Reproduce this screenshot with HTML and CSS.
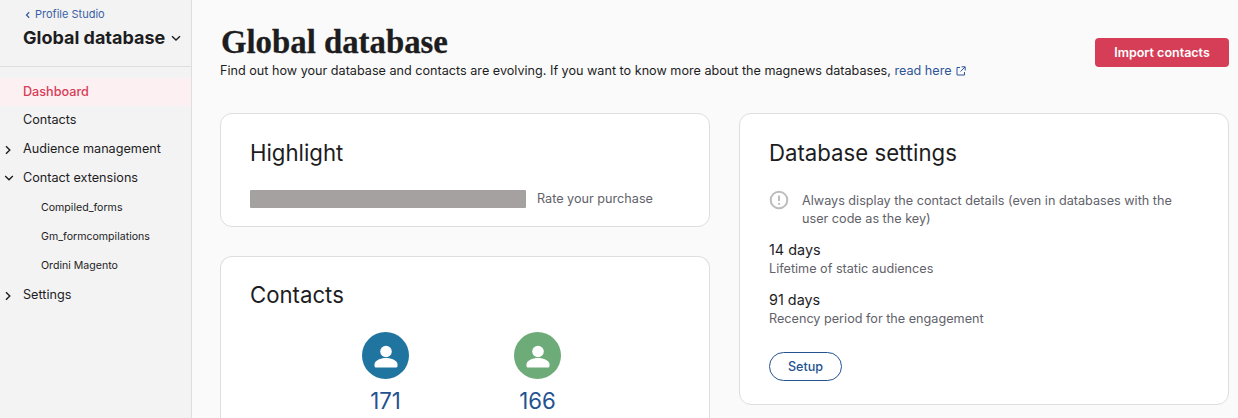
FILE: index.html
```html
<!DOCTYPE html>
<html lang="en">
<head>
    <meta charset="UTF-8">
    <title>Global database</title>
    <link rel="stylesheet" href="styles.css">
</head>
<body>
    <aside class="sidebar">
        <div class="side-head">
            <a class="back-link">
                <svg class="back-icon" width="6" height="8" viewBox="0 0 6 8"><path d="M4.2 1.2 1.5 4l2.7 2.8" fill="none" stroke="currentColor" stroke-width="1.3"/></svg>
                Profile Studio
            </a>
            <div class="side-title">
                Global database
                <svg width="10" height="7" viewBox="0 0 10 7"><path d="M1 1.2 5 5l4-3.8" fill="none" stroke="#1d1d1f" stroke-width="1.4"/></svg>
            </div>
        </div>
        <nav class="side-nav">
            <a class="nav-item active">Dashboard</a>
            <a class="nav-item">Contacts</a>
            <a class="nav-item">
                <svg class="caret" width="8" height="10" viewBox="0 0 8 10"><path d="M2 1.2 5.8 5 2 8.8" fill="none" stroke="#1d1d1f" stroke-width="1.4"/></svg>
                Audience management
            </a>
            <a class="nav-item">
                <svg class="caret" width="10" height="8" viewBox="0 0 10 8"><path d="M1.2 2 5 5.8 8.8 2" fill="none" stroke="#1d1d1f" stroke-width="1.4"/></svg>
                Contact extensions
            </a>
            <div class="sub-list">
                <a class="nav-item sub">Compiled_forms</a>
                <a class="nav-item sub">Gm_formcompilations</a>
                <a class="nav-item sub">Ordini Magento</a>
            </div>
            <a class="nav-item">
                <svg class="caret" width="8" height="10" viewBox="0 0 8 10"><path d="M2 1.2 5.8 5 2 8.8" fill="none" stroke="#1d1d1f" stroke-width="1.4"/></svg>
                Settings
            </a>
        </nav>
    </aside>

    <main class="content">
        <header class="page-head">
            <div>
                <h1>Global database</h1>
                <p class="intro">Find out how your database and contacts are evolving. If you want to know more about the magnews databases, <a class="link">read here
                    <svg width="10" height="10" viewBox="0 0 10 10"><path d="M4 1.500H1v7.500h7.500V6M5.500 .8h3.700v3.700M9 1 4.500 5.500" fill="none" stroke="currentColor" stroke-width="1"/></svg></a></p>
            </div>
            <button class="btn-primary">Import contacts</button>
        </header>

        <div class="columns">
            <div class="col">
                <section class="card highlight">
                    <h2>Highlight</h2>
                    <div class="highlight-row">
                        <span class="redacted"></span>
                        <span class="muted">Rate your purchase</span>
                    </div>
                </section>
                <section class="card contacts">
                    <h2>Contacts</h2>
                    <div class="stats">
                        <div class="stat">
                            <span class="avatar blue">
                                <svg width="26" height="26" viewBox="0 0 26 26"><circle cx="13" cy="8.500" r="5.800" fill="#fff"/><path d="M1.500 23v-1.500c0-4 6-6.500 11.500-6.500s11.500 2.500 11.500 6.500V23q0 1.500-1.500 1.500H3q-1.500 0-1.500-1.500z" fill="#fff"/></svg>
                            </span>
                            <span class="stat-num">171</span>
                        </div>
                        <div class="stat">
                            <span class="avatar green">
                                <svg width="26" height="26" viewBox="0 0 26 26"><circle cx="13" cy="8.500" r="5.800" fill="#fff"/><path d="M1.500 23v-1.500c0-4 6-6.500 11.500-6.500s11.500 2.500 11.500 6.500V23q0 1.500-1.500 1.500H3q-1.500 0-1.500-1.500z" fill="#fff"/></svg>
                            </span>
                            <span class="stat-num">166</span>
                        </div>
                    </div>
                </section>
            </div>

            <div class="col">
                <section class="card settings">
                    <h2>Database settings</h2>
                    <div class="notice">
                        <svg width="20" height="20" viewBox="0 0 20 20"><circle cx="10" cy="10" r="8.300" fill="none" stroke="#bdbdbd" stroke-width="2"/><path d="M10 5.500v5.500M10 13v1.800" stroke="#bdbdbd" stroke-width="2"/></svg>
                        <p>Always display the contact details (even in databases with the user code as the key)</p>
                    </div>
                    <div class="setting">
                        <div class="value">14 days</div>
                        <div class="muted">Lifetime of static audiences</div>
                    </div>
                    <div class="setting">
                        <div class="value">91 days</div>
                        <div class="muted">Recency period for the engagement</div>
                    </div>
                    <button class="btn-outline">Setup</button>
                </section>
            </div>
        </div>
    </main>
</body>
</html>
```

FILE: styles.css
```css
html, body {
    height: 100%;
}

body {
    margin: 0;
    display: flex;
    height: 418px;
    overflow: hidden;
    font-family: 'Inter', sans-serif;
    font-size: 12.65px;
    color: #1d1d1f;
    background: #fafafa;
}

.sidebar {
    width: 191px;
    flex-shrink: 0;
    background: #f3f3f3;
    border-right: 1px solid #dedede;
}

.side-head {
    padding: 8px 0 0 23px;
    height: 58px;
    border-bottom: 1px solid #dedede;
}

.back-link {
    display: flex;
    align-items: center;
    gap: 4px;
    font-size: 11px;
    line-height: 13px;
    color: #3a5fa5;
}

.back-icon {
    margin-left: 2px;
}

.side-title {
    display: flex;
    align-items: center;
    gap: 6px;
    margin-top: 6px;
    font-size: 18px;
    line-height: 22px;
    font-weight: 700;
}

.side-nav {
    padding-top: 10.7px;
}

.nav-item {
    position: relative;
    display: block;
    height: 28.7px;
    line-height: 28.7px;
    padding-left: 23px;
}

.nav-item.active {
    background: #fcf0f2;
    color: #d63d57;
    font-weight: 500;
}

.sub-list {
    padding: 2px 0 0.7px;
}

.nav-item.sub {
    padding-left: 41px;
    font-size: 10.6px;
}

.caret {
    position: absolute;
    left: 4px;
    top: 10px;
}

.content {
    flex: 1;
    min-width: 0;
    padding: 0 9px 0 28px;
}

.page-head {
    display: flex;
    justify-content: space-between;
    align-items: flex-start;
    height: 113px;
}

h1 {
    margin: 25px 0 0;
    padding-left: 1px;
    font-family: 'Liberation Serif', serif;
    font-size: 32.8px;
    line-height: 34px;
    font-weight: 700;
    -webkit-text-stroke: 0.3px #1d1d1f;
}

.intro {
    margin: 2px 0 0;
    font-size: 12.64px;
    line-height: 20px;
}

.link {
    color: #2f5597;
}

.link svg {
    margin-left: 1px;
    vertical-align: -1px;
}

.btn-primary {
    margin-top: 38px;
    width: 134px;
    height: 29px;
    border: 0;
    border-radius: 4px;
    background: #d63d57;
    color: #fff;
    font: 600 12.5px 'Inter', sans-serif;
}

.columns {
    display: flex;
    gap: 29px;
}

.col {
    flex: 1;
    min-width: 0;
    display: flex;
    flex-direction: column;
    gap: 29px;
}

.card {
    background: #fff;
    border: 1px solid #dedede;
    border-radius: 12px;
    padding: 24px 29px;
}

h2 {
    margin: 0;
    padding-top: 1px;
    font-size: 22.2px;
    line-height: 28px;
    font-weight: 400;
}

.highlight {
    height: 114px;
    box-sizing: border-box;
}

.highlight-row {
    display: flex;
    align-items: center;
    gap: 11px;
    margin-top: 23px;
}

.highlight-row .muted {
    margin-bottom: 2px;
}

.redacted {
    width: 276px;
    height: 18px;
    border-radius: 1px;
    background: #a5a1a1;
}

.muted {
    color: #62626a;
}

/* runs under the fold in the real page, so no bottom edge here */
.contacts {
    height: 162px;
    box-sizing: border-box;
    padding-top: 23px;
    padding-bottom: 0;
    border-bottom: 0;
    border-radius: 12px 12px 0 0;
}

.stats {
    display: flex;
    justify-content: center;
    gap: 105px;
    margin: 23px 7px 0 0;
}

.stat {
    display: flex;
    flex-direction: column;
    align-items: center;
    gap: 8px;
}

.avatar {
    display: flex;
    align-items: center;
    justify-content: center;
    width: 47px;
    height: 47px;
    border-radius: 50%;
}

.blue {
    background: #1f75a0;
}

.green {
    background: #6dab78;
}

.stat-num {
    font-size: 22.2px;
    line-height: 28px;
    font-weight: 400;
    color: #24528f;
}

.settings {
    height: 292px;
    box-sizing: border-box;
}

.notice {
    display: flex;
    gap: 13px;
    margin-top: 25px;
}

.notice svg {
    flex-shrink: 0;
    margin-top: -2px;
}

.notice p {
    margin: 0;
    line-height: 18px;
    color: #62626a;
}

.setting {
    margin-top: 13px;
    line-height: 18px;
}

.setting + .setting {
    margin-top: 12px;
}

.setting .muted {
    line-height: 20px;
}

.value {
    font-size: 14.4px;
}

.btn-outline {
    display: block;
    margin-top: 23px;
    width: 73px;
    height: 29px;
    border: 1px solid #24528f;
    border-radius: 15px;
    background: #fff;
    color: #24528f;
    font: 500 12.6px 'Inter', sans-serif;
}
```
